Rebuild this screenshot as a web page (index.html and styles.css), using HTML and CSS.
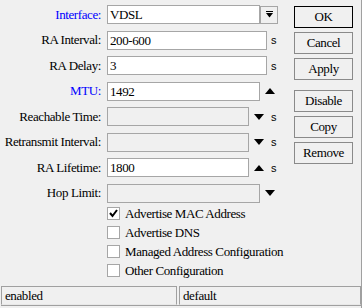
FILE: index.html
```html
<!DOCTYPE html>
<html lang="en">
<head>
    <meta charset="UTF-8">
    <title>ND Interface</title>
    <link rel="stylesheet" href="styles.css">
</head>
<body>
    <div class="window">
        <div class="main">
            <div class="form">
                <div class="rows">
                    <div class="row">
                        <span class="label link">Interface:</span>
                        <div class="field w153">VDSL</div>
                        <div class="drop">
                            <svg width="9" height="8" viewBox="0 0 9 8"><rect x="1" y="0" width="7" height="1" fill="#000"/><polygon points="1,2 8,2 4.5,6.5" fill="#000"/></svg>
                        </div>
                    </div>
                    <div class="row">
                        <span class="label">RA Interval:</span>
                        <div class="field w160">200-600</div>
                        <span class="unit">s</span>
                    </div>
                    <div class="row">
                        <span class="label">RA Delay:</span>
                        <div class="field w160">3</div>
                        <span class="unit">s</span>
                    </div>
                    <div class="row">
                        <span class="label link">MTU:</span>
                        <div class="field w153">1492</div>
                        <span class="spin"><svg width="10" height="6" viewBox="0 0 10 6"><polygon points="0,6 10,6 5,0" fill="#000"/></svg></span>
                    </div>
                    <div class="row">
                        <span class="label">Reachable Time:</span>
                        <div class="field w142 off"></div>
                        <span class="spin"><svg width="10" height="6" viewBox="0 0 10 6"><polygon points="0,0 10,0 5,6" fill="#000"/></svg></span>
                        <span class="unit">s</span>
                    </div>
                    <div class="row">
                        <span class="label">Retransmit Interval:</span>
                        <div class="field w142 off"></div>
                        <span class="spin"><svg width="10" height="6" viewBox="0 0 10 6"><polygon points="0,0 10,0 5,6" fill="#000"/></svg></span>
                        <span class="unit">s</span>
                    </div>
                    <div class="row">
                        <span class="label">RA Lifetime:</span>
                        <div class="field w142">1800</div>
                        <span class="spin"><svg width="10" height="6" viewBox="0 0 10 6"><polygon points="0,6 10,6 5,0" fill="#000"/></svg></span>
                        <span class="unit">s</span>
                    </div>
                    <div class="row">
                        <span class="label">Hop Limit:</span>
                        <div class="field w153 off"></div>
                        <span class="spin"><svg width="10" height="6" viewBox="0 0 10 6"><polygon points="0,0 10,0 5,6" fill="#000"/></svg></span>
                    </div>
                </div>

                <div class="checks">
                    <div class="check">
                        <span class="box"><svg width="11" height="11" viewBox="0 0 11 11"><polyline points="2,5 4.5,8 9,2" fill="none" stroke="#000" stroke-width="2"/></svg></span>
                        <span>Advertise MAC Address</span>
                    </div>
                    <div class="check"><span class="box"></span><span>Advertise DNS</span></div>
                    <div class="check"><span class="box"></span><span>Managed Address Configuration</span></div>
                    <div class="check"><span class="box"></span><span>Other Configuration</span></div>
                </div>
            </div>

            <div class="buttons">
                <div class="btn default">OK</div>
                <div class="btn">Cancel</div>
                <div class="btn">Apply</div>
                <div class="btn spaced">Disable</div>
                <div class="btn">Copy</div>
                <div class="btn">Remove</div>
            </div>
        </div>

        <div class="status">
            <div class="panel left">enabled</div>
            <div class="panel right">default</div>
        </div>
    </div>
</body>
</html>
```

FILE: styles.css
```css
* {
    box-sizing: border-box;
}
body {
    margin: 0;
    background-color: #f0f0f0;
    color: #000;
}
.window {
    width: 362px;
    height: 308px;
    display: flex;
    flex-direction: column;
    border-right: 1px solid #a0a0a0;
    font-family: "Liberation Serif", serif;
    font-size: 13px;
    letter-spacing: -0.4px;
}
.main {
    flex: 1;
    display: flex;
}
.form {
    width: 294px;
    padding-top: 5px;
}
.rows {
    display: flex;
    flex-direction: column;
    gap: 6.5px;
}
.row {
    display: flex;
    align-items: center;
    height: 19px;
}
.label {
    width: 101px;
    margin-right: 6px;
    text-align: right;
    white-space: nowrap;
}
.link {
    color: #0000ff;
}
.field {
    height: 19px;
    line-height: 17px;
    padding: 0 2px;
    border: 1px solid #a6a6a6;
    background-color: #fff;
}
.field.off {
    background-color: #f0f0f0;
}
.w153 { width: 153px; }
.w160 { width: 160px; }
.w142 { width: 142px; }
.drop {
    width: 18px;
    height: 18px;
    border: 1px solid #a6a6a6;
    display: flex;
    align-items: center;
    justify-content: center;
}
.spin {
    width: 20px;
    display: flex;
    justify-content: center;
}
.unit {
    margin-left: 4px;
    font-family: "Liberation Sans", sans-serif;
    font-size: 11px;
    letter-spacing: 0;
}
.spin + .unit {
    margin-left: 2px;
}
.checks {
    margin-top: 1.5px;
    padding-left: 107px;
}
.check {
    display: flex;
    align-items: center;
    height: 19px;
    white-space: nowrap;
}
.box {
    width: 13px;
    height: 13px;
    margin-right: 5px;
    border: 1px solid #a6a6a6;
    background-color: #fff;
    display: flex;
    align-items: center;
    justify-content: center;
}
.buttons {
    width: 59px;
    padding-top: 6px;
    display: flex;
    flex-direction: column;
    gap: 4px;
}
.btn {
    height: 22px;
    line-height: 20px;
    text-align: center;
    border: 1px solid #8a8a8a;
    background-color: #f0f0f0;
}
.btn.default {
    border-color: #000;
}
.btn.spaced {
    margin-top: 6px;
}
.status {
    display: flex;
    gap: 2px;
    height: 20px;
    margin: 0 0 2px 1px;
    border-bottom: 1px solid #a0a0a0;
}
.panel {
    height: 19px;
    line-height: 17px;
    padding: 0 3px;
    border: 1px solid #a0a0a0;
    border-bottom-color: #e8e8e8;
    white-space: nowrap;
}
.left {
    width: 176px;
}
.right {
    flex: 1;
}
```
